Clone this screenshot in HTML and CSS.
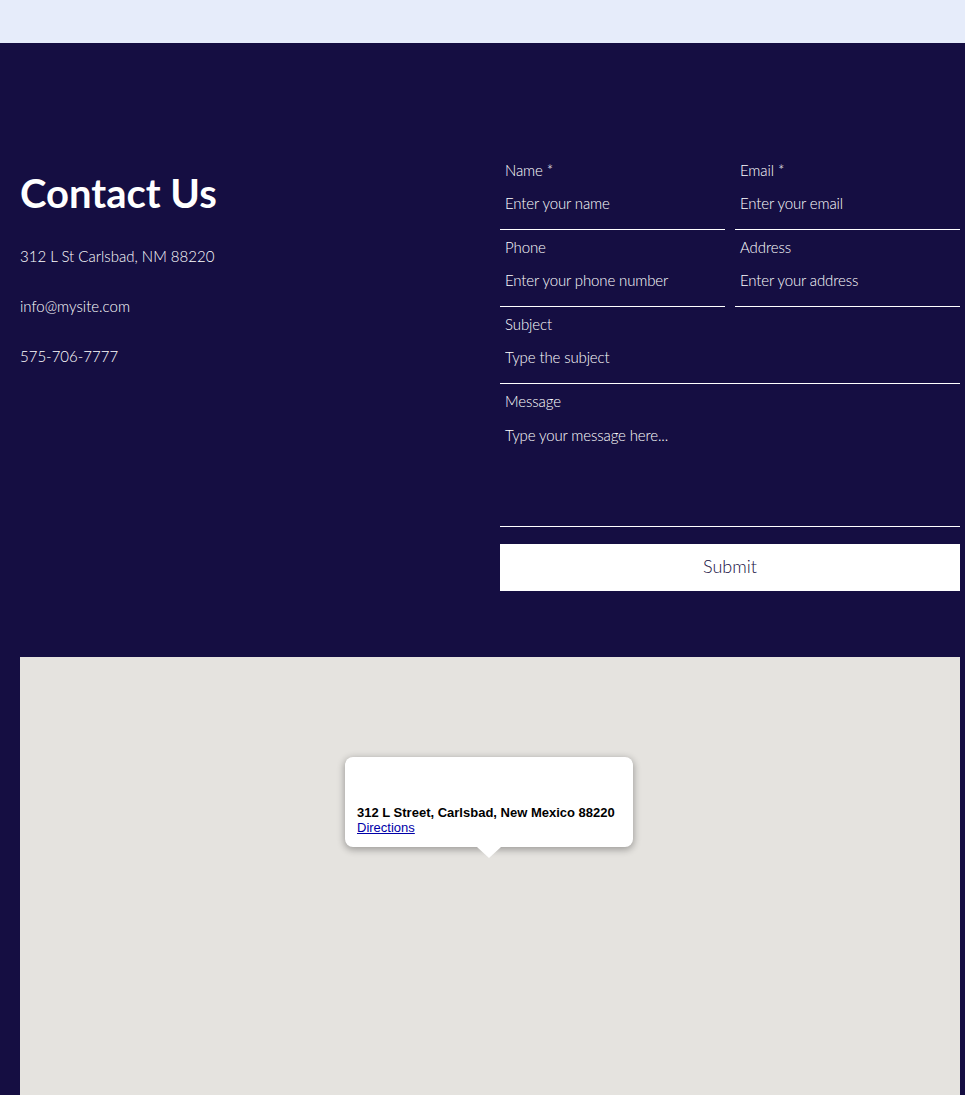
FILE: index.html
```html
<!DOCTYPE html>
<html lang="en">
<head>
  <meta charset="UTF-8" />
  <title>Contact Us</title>
  <link rel="stylesheet" href="styles.css">
</head>
<body>
  <div class="top-band"></div>

  <div class="contact">
    <div class="contact-row">
      <div class="contact-info">
        <h1>Contact Us</h1>
        <p>312 L St Carlsbad, NM 88220</p>
        <p>info@mysite.com</p>
        <p>575-706-7777</p>
      </div>

      <form class="contact-form">
        <div class="field">
          <label for="name">Name *</label>
          <input id="name" type="text" placeholder="Enter your name">
        </div>
        <div class="field">
          <label for="email">Email *</label>
          <input id="email" type="text" placeholder="Enter your email">
        </div>
        <div class="field">
          <label for="phone">Phone</label>
          <input id="phone" type="text" placeholder="Enter your phone number">
        </div>
        <div class="field">
          <label for="address">Address</label>
          <input id="address" type="text" placeholder="Enter your address">
        </div>
        <div class="field field-wide">
          <label for="subject">Subject</label>
          <input id="subject" type="text" placeholder="Type the subject">
        </div>
        <div class="field field-wide">
          <label for="message">Message</label>
          <textarea id="message" placeholder="Type your message here..."></textarea>
        </div>
        <button class="submit" type="button">Submit</button>
      </form>
    </div>

    <div class="map">
      <div class="map-popup">
        <strong>312 L Street, Carlsbad, New Mexico 88220</strong>
        <a href="#">Directions</a>
      </div>
    </div>
  </div>
</body>
</html>
```

FILE: styles.css
```css
* {
  box-sizing: border-box;
}
html, body {
  height: 1095px;
  overflow: hidden;
}
body {
  margin: 0;
  font-family: "Lato", sans-serif;
  font-weight: 300;
  background-color: #150e42;
  color: #fff;
}
.top-band {
  height: 43px;
  background-color: #e6ecfa;
}
.contact {
  padding: 0 5px 0 20px;
}
.contact-row {
  display: flex;
  justify-content: space-between;
  padding-top: 117px;
}

/* Left column */
.contact-info {
  padding-top: 9px;
}
.contact-info h1 {
  margin: 0 0 27px;
  font-size: 40px;
  line-height: 48px;
  font-weight: 700;
}
.contact-info p {
  margin: 0 0 26px;
  font-size: 15px;
  line-height: 24px;
  color: #fff;
}

/* Form */
.contact-form {
  width: 460px;
  display: grid;
  grid-template-columns: 225px 225px;
  column-gap: 10px;
  row-gap: 7px;
}
.field {
  display: flex;
  flex-direction: column;
}
.field-wide {
  grid-column: 1 / 3;
}
.field label {
  height: 21px;
  padding-left: 5px;
  font-size: 15px;
  line-height: 21px;
  letter-spacing: -0.1px;
  color: #fff;
}
.field input,
.field textarea {
  display: block;
  width: 100%;
  margin: 0;
  padding: 0 5px 5px;
  border: 0;
  border-bottom: 1px solid #fff;
  border-radius: 0;
  outline: 0;
  resize: none;
  background-color: #150e42;
  color: #fff;
  font-family: inherit;
  font-size: 15px;
  font-weight: 300;
  letter-spacing: -0.13px;
}
.field input {
  height: 49px;
}
.field textarea {
  height: 115px;
  padding-top: 13px;
  line-height: 21px;
}
.field input::placeholder,
.field textarea::placeholder {
  color: #fff;
  opacity: 1;
}
.submit {
  grid-column: 1 / 3;
  height: 47px;
  margin-top: 10px;
  padding: 0 0 4px;
  border: 0;
  background-color: #fff;
  color: #150e42;
  font-family: inherit;
  font-size: 18px;
  font-weight: 300;
}

/* Map */
.map {
  position: relative;
  height: 438px;
  margin-top: 66px;
  background-color: #e5e3df;
}
.map-popup {
  position: absolute;
  left: 325px;
  top: 100px;
  width: 288px;
  height: 90px;
  padding: 48px 12px 0;
  border-radius: 8px;
  background-color: #fff;
  box-shadow: 0 2px 7px 1px rgba(0,0,0,0.3);
  color: #000;
  font-family: "Liberation Sans", Arial, sans-serif;
  font-size: 13px;
  line-height: 15px;
  font-weight: 400;
}
.map-popup::after {
  content: "";
  position: absolute;
  left: 132px;
  bottom: -11px;
  border-top: 11px solid #fff;
  border-left: 12px solid transparent;
  border-right: 12px solid transparent;
}
.map-popup strong {
  display: block;
  font-weight: 700;
}
.map-popup a {
  color: #0000a8;
}
```
